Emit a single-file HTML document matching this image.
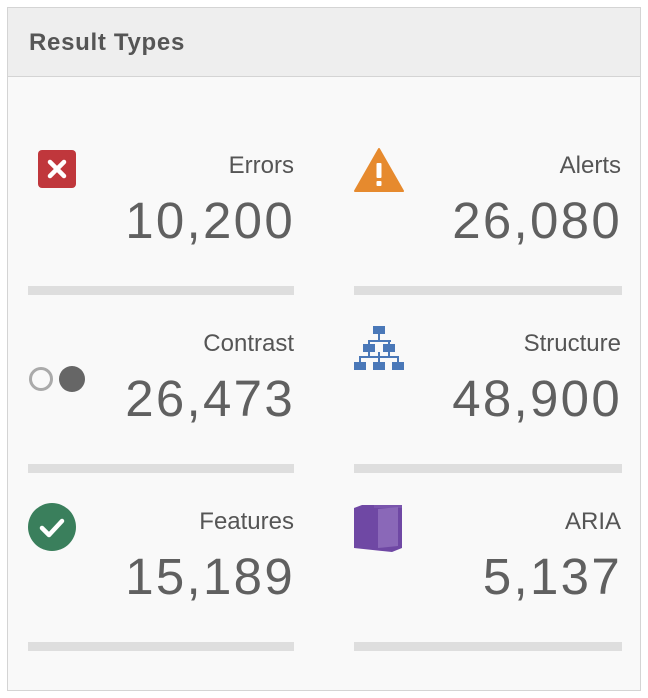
<!DOCTYPE html>
<html><head><style>
body{margin:0;width:648px;height:698px;background:#fff;font-family:"Liberation Sans",sans-serif;position:relative;overflow:hidden}
.panel{position:absolute;left:7px;top:7px;width:632px;height:682px;border:1px solid #d4d4d4;background:#f9f9f9}
.hdr{height:68px;background:#eeeeee;border-bottom:1px solid #d4d4d4;}
.hdr span{position:absolute;left:21px;top:21px;font-size:24px;font-weight:bold;color:#555;letter-spacing:0.7px}
.lbl{position:absolute;font-size:24px;color:#555;text-align:right;letter-spacing:0px}
.num{position:absolute;font-size:51px;color:#606060;text-align:right;letter-spacing:2.3px}
.bar{position:absolute;height:9px;background:#dedede}
.ic{position:absolute}
</style></head><body>
<div class="panel"><div class="hdr"><span>Result Types</span></div></div>

<div class="lbl" style="right:354px;top:152px">Errors</div>
<div class="num" style="right:353px;top:191px">10,200</div>
<div class="bar" style="left:28px;width:266px;top:286px"></div>
<div class="lbl" style="right:27px;top:152px">Alerts</div>
<div class="num" style="right:26px;top:191px">26,080</div>
<div class="bar" style="left:354px;width:268px;top:286px"></div>

<div class="lbl" style="right:354px;top:330px">Contrast</div>
<div class="num" style="right:353px;top:369px">26,473</div>
<div class="bar" style="left:28px;width:266px;top:464px"></div>
<div class="lbl" style="right:27px;top:330px">Structure</div>
<div class="num" style="right:26px;top:369px">48,900</div>
<div class="bar" style="left:354px;width:268px;top:464px"></div>

<div class="lbl" style="right:354px;top:508px">Features</div>
<div class="num" style="right:353px;top:547px">15,189</div>
<div class="bar" style="left:28px;width:266px;top:642px"></div>
<div class="lbl" style="right:27px;top:508px">ARIA</div>
<div class="num" style="right:26px;top:547px">5,137</div>
<div class="bar" style="left:354px;width:268px;top:642px"></div>

<svg class="ic" style="left:38px;top:150px" width="38" height="38"><rect width="38" height="38" rx="4" fill="#c0373c"/><path d="M12 12L26 26M26 12L12 26" stroke="#fff" stroke-width="4.5" stroke-linecap="round"/></svg>
<svg class="ic" style="left:354px;top:147px" width="50" height="45"><path d="M25 2L49 44H1Z" fill="#e68a2e" stroke="#e68a2e" stroke-width="2" stroke-linejoin="round"/><rect x="22.5" y="16" width="5" height="15" rx="1" fill="#fff"/><rect x="22.5" y="34" width="5" height="5" rx="1" fill="#fff"/></svg>
<svg class="ic" style="left:28px;top:365px" width="60" height="28"><circle cx="13" cy="14" r="10.5" fill="none" stroke="#aaa" stroke-width="3"/><circle cx="44" cy="14" r="13" fill="#666"/></svg>
<svg class="ic" style="left:354px;top:326px" width="52" height="44" fill="#4a78b8"><rect x="19" y="0" width="12" height="8"/><rect x="24" y="8" width="2" height="8"/><rect x="15" y="14" width="22" height="2"/><rect x="9" y="18" width="12" height="8"/><rect x="29" y="18" width="12" height="8"/><rect x="14" y="14" width="2" height="4"/><rect x="34" y="14" width="2" height="4"/><rect x="14" y="26" width="2" height="4"/><rect x="34" y="26" width="2" height="4"/><rect x="5" y="30" width="40" height="2"/><rect x="5" y="30" width="2" height="6"/><rect x="24" y="26" width="2" height="10"/><rect x="43" y="30" width="2" height="6"/><rect x="0" y="36" width="12" height="8"/><rect x="19" y="36" width="12" height="8"/><rect x="38" y="36" width="12" height="8"/></svg>
<svg class="ic" style="left:28px;top:503px" width="48" height="48"><circle cx="24" cy="24" r="24" fill="#3a7f5c"/><path d="M14 25L21 32L34 18" fill="none" stroke="#fff" stroke-width="4.5" stroke-linecap="round" stroke-linejoin="round"/></svg>
<svg class="ic" style="left:354px;top:504px" width="48" height="48"><path d="M0 4L8 1H48V44L38 48L0 44Z" fill="#6f48a4"/><path d="M20 1H48V4L20 4Z" fill="#7a55ad"/><path d="M24 5L44 3V42L24 44Z" fill="#8a68b8"/></svg>
</body></html>
